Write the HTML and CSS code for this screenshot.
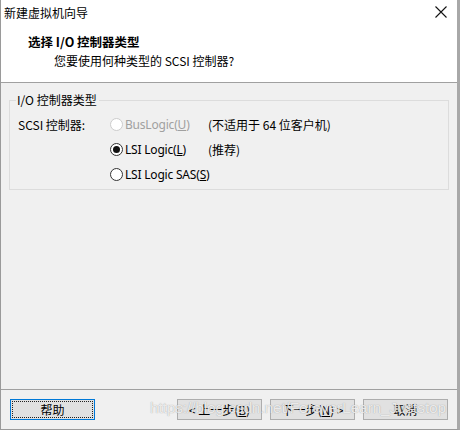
FILE: index.html
```html
<!DOCTYPE html>
<html lang="zh">
<head>
<meta charset="utf-8">
<title>新建虚拟机向导</title>
<link rel="stylesheet" href="styles.css">
</head>
<body>
<div class="window">
  <div class="titlebar">
    <span class="title">新建虚拟机向导</span>
    <svg class="close" width="12" height="12" viewBox="0 0 12 12"><path d="M0.5 0.5 L11.5 11.5 M11.5 0.5 L0.5 11.5" stroke="#111" stroke-width="1.1" fill="none"/></svg>
  </div>
  <div class="header">
    <div class="heading">选择 I/O 控制器类型</div>
    <div class="subheading">您要使用何种类型的 SCSI 控制器?</div>
  </div>
  <div class="content">
    <fieldset class="group">
      <legend class="legend">I/O 控制器类型</legend>
      <div class="grid">
        <div class="label">SCSI 控制器:</div>
        <div class="option disabled"><span class="radio"></span><span>BusLogic(<u>U</u>)</span></div>
        <div class="note">(不适用于 64 位客户机)</div>

        <div></div>
        <div class="option"><span class="radio checked"></span><span>LSI Logic(<u>L</u>)</span></div>
        <div class="note">(推荐)</div>

        <div></div>
        <div class="option"><span class="radio"></span><span>LSI Logic SAS(<u>S</u>)</span></div>
        <div></div>
      </div>
    </fieldset>
  </div>
  <div class="footer">
    <button class="btn focus"><span class="focus-ring">帮助</span></button>
    <div class="spacer"></div>
    <button class="btn">&lt; 上一步(<u>B</u>)</button>
    <button class="btn">下一步(<u>N</u>) &gt;</button>
    <button class="btn">取消</button>
    <div class="watermark">https://blog.csdn.net/ForeverLearn_Juststop</div>
  </div>
</div>
</body>
</html>
```
FILE: styles.css
```css
* { box-sizing: border-box; }
html, body { margin: 0; padding: 0; background: #ffffff; }
body {
  width: 460px;
  height: 432px;
  font-family: "Noto Sans", "Noto Sans CJK SC", sans-serif;
  font-size: 12px;
  color: #000;
}
.window {
  width: 460px;
  height: 430px;
  border-left: 1px solid #9a9a9a;
  border-right: 3px solid #a8a8a8;
  border-bottom: 1px solid #9a9a9a;
  background: #f0f0f0;
  display: flex;
  flex-direction: column;
}
.titlebar {
  height: 28px;
  background: #fff;
  display: flex;
  align-items: center;
  justify-content: space-between;
  padding: 0 10px 0 3px;
}
.title {
  font-family: "Noto Sans CJK SC", sans-serif;
  font-size: 12px;
  line-height: 16px;
  margin-top: -2px;
}
.close { display: block; margin-top: -4px; }
.header {
  height: 55px;
  background: #fff;
  border-bottom: 1px solid #a0a0a0;
  padding: 6px 0 0 27px;
}
.heading {
  font-family: "Noto Sans CJK SC", sans-serif;
  font-weight: bold;
  font-size: 12.5px;
  line-height: 16px;
}
.subheading {
  font-family: "Noto Sans CJK SC", sans-serif;
  font-size: 12px;
  line-height: 16px;
  margin-top: 3px;
  padding-left: 26px;
}
.content {
  flex: 1;
  padding: 9px 8px 0 8px;
}
.group {
  margin: 0;
  border: 1px solid #dcdcdc;
  padding: 4px 8px 2px 8px;
}
.legend {
  font-family: "Noto Sans CJK SC", sans-serif;
  padding: 0 2px 0 1px;
  margin-left: -2px;
  line-height: 16px;
}
.grid {
  display: grid;
  grid-template-columns: 92px 98px auto;
  grid-auto-rows: 25px;
  align-items: center;
}
.label, .note {
  font-family: "Noto Sans CJK SC", sans-serif;
  white-space: nowrap;
}
.option {
  display: flex;
  align-items: center;
  gap: 2px;
  font-family: "Noto Sans", sans-serif;
  letter-spacing: -0.2px;
  white-space: nowrap;
}
.option.disabled { color: #a0a0a0; }
.radio {
  flex: none;
  width: 13px;
  height: 13px;
  border-radius: 50%;
  border: 1px solid #333;
  background: #fff;
  display: flex;
  align-items: center;
  justify-content: center;
}
.option.disabled .radio { border-color: #cccccc; }
.radio.checked::after {
  content: "";
  width: 7px;
  height: 7px;
  border-radius: 50%;
  background: #111;
}
.footer {
  position: relative;
  height: 40px;
  border-top: 1px solid #a0a0a0;
  display: flex;
  align-items: flex-start;
  padding: 9px 9px 0 9px;
  gap: 8px;
}
.spacer { flex: 1; }
.btn {
  width: 85px;
  height: 21px;
  background: #e1e1e1;
  border: 1px solid #adadad;
  font-family: "Noto Sans CJK SC", sans-serif;
  font-size: 12px;
  color: #000;
  padding: 0;
  display: flex;
  align-items: center;
  justify-content: center;
}
.btn.focus {
  border: 1px solid #0078d7;
  padding: 1px;
}
.focus-ring {
  display: flex;
  align-items: center;
  justify-content: center;
  width: 100%;
  height: 100%;
  border: 1px dotted #222;
}
.watermark {
  position: absolute;
  left: 149px;
  top: 9px;
  font-family: "Liberation Sans", sans-serif;
  font-size: 15.5px;
  letter-spacing: -0.15px;
  color: rgba(255, 255, 255, 0.8);
  text-shadow: 0 0 1px rgba(110,110,110,0.7);
  white-space: nowrap;
  pointer-events: none;
}
```
